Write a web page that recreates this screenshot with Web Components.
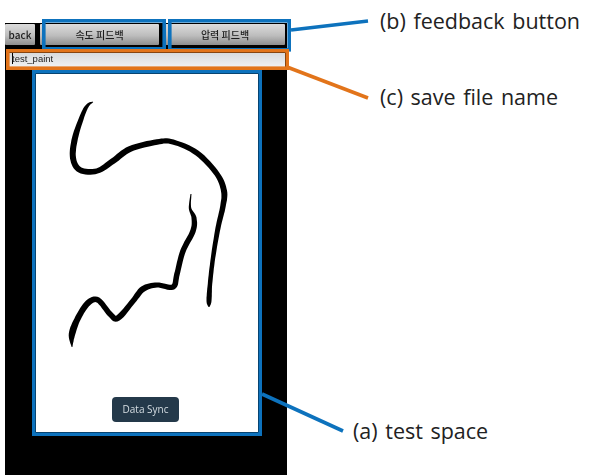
<!DOCTYPE html>
<html>
<head>
<meta charset="utf-8">
<style>
  html, body { margin: 0; background: #fff; }
</style>
</head>
<body>
<figure-page>
  <phone-screen slot="phone">
    <gray-button slot="bar" style="width:30px">back</gray-button>
    <gray-button slot="bar" style="width:119px;margin-left:5px;padding-left:0">속도 피드백</gray-button>
    <gray-button slot="bar" style="width:120px;margin-left:6px">압력 피드백</gray-button>
    <name-field slot="field">test_paint</name-field>
    <paint-space slot="space"></paint-space>
  </phone-screen>
  <call-label slot="labels" style="margin:-17px 0 0 93px">(b) feedback button</call-label>
  <call-label slot="labels" style="margin:46px 0 0 93px">(c) save file name</call-label>
  <call-label slot="labels" style="margin:304px 0 0 66px">(a) test space</call-label>
</figure-page>

<script>
class FigurePage extends HTMLElement{
    constructor(){
        super();
        const el = this.attachShadow({mode:'open'})
        el.innerHTML = `
        <style>
        :host{
          display: flex;
          position: relative;
          width: 599px;
          height: 475px;
          overflow: hidden;
          background: #fff;
          padding: 23px 0 0 5px;
          box-sizing: border-box;
        }
        .labels{
          display: flex;
          flex-direction: column;
          align-items: flex-start;
        }
        svg{
          position: absolute;
          left: 0;
          top: 0;
          filter: blur(.3px);
        }
        </style>
        <slot name="phone"></slot>
        <div class="labels"><slot name="labels"></slot></div>
        <svg width="599" height="475" fill="none" stroke-width="3.6">
          <g stroke="#0d72bd">
            <rect x="43.8" y="20.8" width="120.4" height="28"/>
            <rect x="169.8" y="20.8" width="119.4" height="29"/>
            <rect x="33.8" y="71.8" width="226.4" height="362.4"/>
            <path d="M291 30 L368 21"/>
            <path d="M262 394 L343 431"/>
          </g>
          <g stroke="#e2741a">
            <rect x="7.8" y="50.8" width="279.4" height="17.4"/>
            <path d="M287 67 L368 98"/>
          </g>
        </svg>`
    }
}
customElements.define('figure-page', FigurePage)

class PhoneScreen extends HTMLElement{
    constructor(){
        super();
        const el = this.attachShadow({mode:'open'})
        el.innerHTML = `
        <style>
        :host{
          display: flex;
          flex-direction: column;
          flex: none;
          width: 282px;
          height: 452px;
          background: #000;
          filter: blur(.35px);
        }
        .bar{
          display: flex;
          height: 22px;
          padding-top: 1px;
        }
        .field{
          padding: 7px 2px 0 3px;
        }
        .space{
          padding: 7px 0 0 31px;
        }
        </style>
        <div class="bar"><slot name="bar"></slot></div>
        <div class="field"><slot name="field"></slot></div>
        <div class="space"><slot name="space"></slot></div>`
    }
}
customElements.define('phone-screen', PhoneScreen)

class GrayButton extends HTMLElement{
    constructor(){
        super();
        const el = this.attachShadow({mode:'open'})
        el.innerHTML = `
        <style>
        :host{
          display: flex;
          flex: none;
          align-items: center;
          justify-content: center;
          height: 21px;
          box-sizing: border-box;
          border-radius: 1px;
          background: linear-gradient(#dcdcdc, #bdbdbd 55%, #8e8e8e);
          color: #1c1c1c;
          font: 500 10px "Noto Sans CJK KR", "Liberation Sans", sans-serif;
        }
        </style>
        <slot></slot>`
    }
}
customElements.define('gray-button', GrayButton)

class NameField extends HTMLElement{
    constructor(){
        super();
        const el = this.attachShadow({mode:'open'})
        el.innerHTML = `
        <style>
        :host{
          display: block;
          height: 14px;
          box-sizing: border-box;
          padding-left: 4px;
          background: linear-gradient(#d8dadc, #f0f1f2);
          color: #222;
          font: 9.5px/11px "Liberation Sans", sans-serif;
        }
        i{
          display: inline-block;
          width: 1px;
          height: 11px;
          margin-right: -1px;
          background: #000;
          vertical-align: top;
        }
        </style>
        <i></i><slot></slot>`
    }
}
customElements.define('name-field', NameField)

// outline of a brush stroke from [x, y, width] points, smoothed with catmull-rom
function brushPath(pts){
    const dense = []
    for(let i = 0; i < pts.length - 1; i++){
        const a = pts[Math.max(i-1,0)], b = pts[i], c = pts[i+1], d = pts[Math.min(i+2,pts.length-1)]
        for(let s = 0; s < 8; s++){
            const t = s/8
            dense.push([0,1,2].map(k => .5*(2*b[k] + (c[k]-a[k])*t + (2*a[k]-5*b[k]+4*c[k]-d[k])*t*t + (3*b[k]-a[k]-3*c[k]+d[k])*t*t*t)))
        }
    }
    dense.push(pts[pts.length-1])
    const left = [], right = []
    dense.forEach((p,i) => {
        const q = dense[Math.min(i+1,dense.length-1)], o = dense[Math.max(i-1,0)]
        const dx = q[0]-o[0], dy = q[1]-o[1], len = Math.hypot(dx,dy) || 1
        const w = p[2]/2
        left.push((p[0]-dy/len*w).toFixed(1)+' '+(p[1]+dx/len*w).toFixed(1))
        right.unshift((p[0]+dy/len*w).toFixed(1)+' '+(p[1]-dx/len*w).toFixed(1))
    })
    return 'M'+left.concat(right).join('L')+'Z'
}

class PaintSpace extends HTMLElement{
    constructor(){
        super();
        const el = this.attachShadow({mode:'open'})
        // page coordinates, shifted by the space's own corner (36,73)
        const first = [[93,101,.8],[88,104,3.2],[83,113,4.5],[75,137,6],[73,157,6],[80,169,6],[97,170,5.5],[113,160,6],[130,148,6],[157,141,5.5],[173,141,5],[197,152,5.5],[217,173,5.5],[224,190,6],[223,205,5.5],[218,227,5],[213,257,4.5],[210,283,4.5],[209,300,5],[209,306,1]]
        const second = [[191,193,1],[190,207,2.4],[194,217,5],[193,230,5.5],[183,250,5.5],[177,273,5.5],[173,286,5.5],[157,284,5],[143,288,6],[133,300,5.5],[118,317,6],[110,313,5.5],[98,299,5.5],[88,302,6],[78,317,6],[72,333,6.5],[72,346,.8]]
        const shift = s => s.map(p => [p[0]-36,p[1]-73,p[2]])
        el.innerHTML = `
        <style>
        :host{
          display: block;
          position: relative;
          width: 222px;
          height: 358px;
          box-sizing: border-box;
          background: #fff;
        }
        svg{
          position: absolute;
          left: 0;
          top: 0;
        }
        .sync{
          position: absolute;
          left: 76px;
          top: 323px;
          width: 67px;
          height: 25px;
          border-radius: 4px;
          background: #24394a;
          color: #d5dde2;
          font: 10px/25px "Open Sans", sans-serif;
          text-align: center;
        }
        </style>
        <svg width="222" height="358"><path fill="#000" d="${brushPath(shift(first))}"/><path fill="#000" d="${brushPath(shift(second))}"/></svg>
        <div class="sync">Data Sync</div>`
    }
}
customElements.define('paint-space', PaintSpace)

class CallLabel extends HTMLElement{
    constructor(){
        super();
        const el = this.attachShadow({mode:'open'})
        el.innerHTML = `
        <style>
        :host{
          display: block;
          color: #222;
          font: 21.5px/30px "Open Sans", sans-serif;
          white-space: nowrap;
          word-spacing: 2px;
        }
        </style>
        <slot></slot>`
    }
}
customElements.define('call-label', CallLabel)
</script>
</body>
</html>
